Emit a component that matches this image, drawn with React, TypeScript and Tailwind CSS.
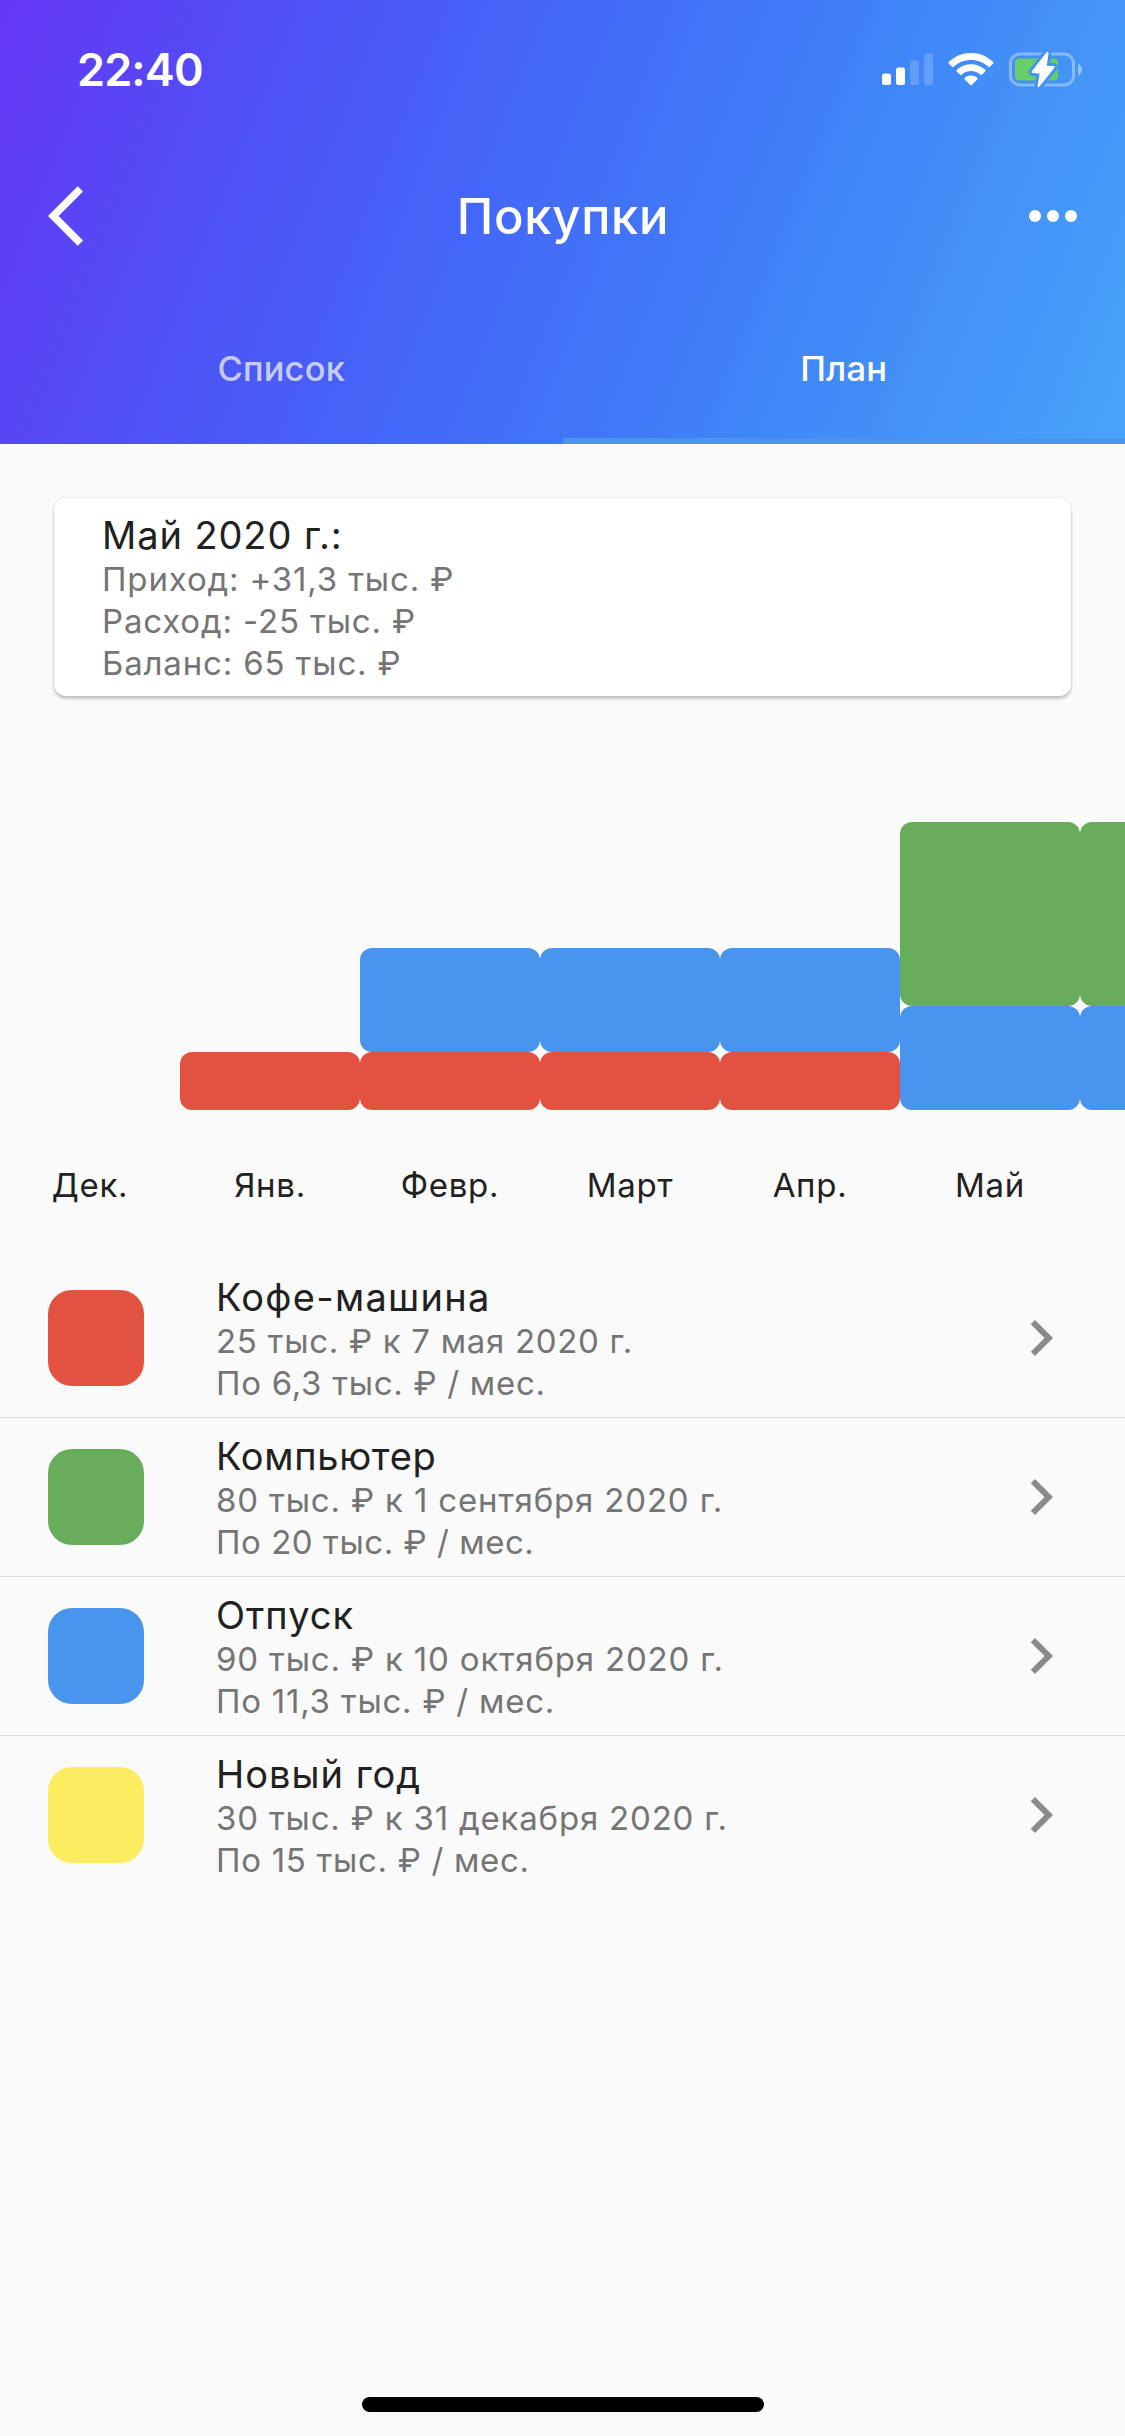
import { clsx } from "clsx";

type Goal = {
  title: string;
  titleTracking: string;
  target: string;
  targetTracking: string;
  monthly: string;
  monthlyTracking: string;
  color: string;
};

type Segment = { color: string; height: string };

const RED = "bg-[#e15241]";
const GREEN = "bg-[#67ad5b]";
const BLUE = "bg-[#4994ec]";
const YELLOW = "bg-[#fcec60]";

const goals: Goal[] = [
  {
    title: "Кофе-машина",
    titleTracking: "tracking-[1.25px]",
    target: "25 тыс. ₽ к 7 мая 2020 г.",
    targetTracking: "tracking-[0.7px]",
    monthly: "По 6,3 тыс. ₽ / мес.",
    monthlyTracking: "tracking-[0.7px]",
    color: RED,
  },
  {
    title: "Компьютер",
    titleTracking: "tracking-[0.7px]",
    target: "80 тыс. ₽ к 1 сентября 2020 г.",
    targetTracking: "tracking-[0.83px]",
    monthly: "По 20 тыс. ₽ / мес.",
    monthlyTracking: "tracking-[0.53px]",
    color: GREEN,
  },
  {
    title: "Отпуск",
    titleTracking: "tracking-[1px]",
    target: "90 тыс. ₽ к 10 октября 2020 г.",
    targetTracking: "tracking-[0.82px]",
    monthly: "По 11,3 тыс. ₽ / мес.",
    monthlyTracking: "tracking-[0.76px]",
    color: BLUE,
  },
  {
    title: "Новый год",
    titleTracking: "tracking-[1px]",
    target: "30 тыс. ₽ к 31 декабря 2020 г.",
    targetTracking: "tracking-[0.8px]",
    monthly: "По 15 тыс. ₽ / мес.",
    monthlyTracking: "tracking-[0.68px]",
    color: YELLOW,
  },
];

const coffee: Segment = { color: RED, height: "h-[58px]" };
const vacation: Segment = { color: BLUE, height: "h-[103.6px]" };
const computer: Segment = { color: GREEN, height: "h-[184.2px]" };

const months: { name: string; segments: Segment[] }[] = [
  { name: "Дек.", segments: [] },
  { name: "Янв.", segments: [coffee] },
  { name: "Февр.", segments: [vacation, coffee] },
  { name: "Март", segments: [vacation, coffee] },
  { name: "Апр.", segments: [vacation, coffee] },
  { name: "Май", segments: [computer, vacation] },
  { name: "", segments: [computer, vacation] },
];

function SignalIcon() {
  return (
    <svg width="51" height="33" viewBox="0 0 51 33" fill="#fff">
      <rect x="0" y="20.5" width="9" height="11.5" rx="2.5" />
      <rect x="14" y="14.5" width="9" height="17.5" rx="2.5" />
      <rect x="28" y="7.5" width="9" height="24.5" rx="2.5" opacity="0.18" />
      <rect x="42" y="0.5" width="9" height="31.5" rx="2.5" opacity="0.18" />
    </svg>
  );
}

function WifiIcon() {
  return (
    <svg width="46" height="33" viewBox="0 0 46 33" fill="#fff">
      <path d="M23 0C31.400 0 39.200 3.300 45.200 8.900Q46 9.700 45.200 10.500L41.900 13.800Q41.200 14.500 40.400 13.800C35.800 9.500 29.600 7 23 7S10.200 9.500 5.600 13.800Q4.800 14.500 4.100 13.800L0.800 10.500Q0 9.700 0.800 8.900C6.800 3.300 14.600 0 23 0Z" />
      <path d="M23 11.200C28.400 11.200 33.400 13.200 37.200 16.800Q38 17.600 37.200 18.400L33.900 21.700Q33.200 22.400 32.400 21.700C29.800 19.400 26.500 18.100 23 18.100S16.200 19.400 13.600 21.700Q12.800 22.400 12.100 21.700L8.800 18.400Q8 17.600 8.800 16.800C12.600 13.200 17.600 11.200 23 11.200Z" />
      <path d="M23 22.600C25.300 22.600 27.500 23.400 29.200 24.700Q30.100 25.500 29.200 26.400L23.700 32Q23 32.700 22.300 32L16.800 26.400Q15.900 25.500 16.800 24.700C18.500 23.400 20.700 22.600 23 22.600Z" />
    </svg>
  );
}

const BOLT =
  "M38 0.300Q39.600 -0.300 39.500 1.600L37.800 14.200L44.600 14.400Q46.300 14.700 45.300 16.500L30.300 35.200Q28.700 36.600 28.600 34.600L30.600 21.900L23.600 21.600Q21.900 21.300 22.900 19.500Z";

function BatteryIcon() {
  return (
    <svg width="74" height="37" viewBox="0 -0.500 74 37">
      <mask id="bolt-gap" maskUnits="userSpaceOnUse" x="0" y="-1" width="74" height="39">
        <rect x="0" y="-1" width="74" height="39" fill="#fff" />
        <path d={BOLT} fill="#000" stroke="#000" strokeWidth="6" strokeLinejoin="round" />
      </mask>
      <g mask="url(#bolt-gap)">
        <rect x="1.500" y="2.500" width="63" height="31" rx="9.500" fill="none" stroke="#fff" strokeOpacity="0.36" strokeWidth="3" />
        <rect x="6" y="7" width="43" height="22" rx="4" fill="#67ce67" />
      </g>
      <path d="M69 12C71.500 13 73 15.200 73 18S71.500 23 69 24Z" fill="#fff" fillOpacity="0.42" />
      <path d={BOLT} fill="#fff" />
    </svg>
  );
}

function StatusBar() {
  return (
    <div className="flex h-[132px] items-center justify-between pt-1.5 pr-[42px] pl-[77px]">
      <span className="text-[45px] leading-none font-semibold tracking-[-0.85px]">22:40</span>
      <div className="flex items-center">
        <SignalIcon />
        <div className="mr-[15px] ml-[15px]">
          <WifiIcon />
        </div>
        <BatteryIcon />
      </div>
    </div>
  );
}

function NavBar() {
  return (
    <div className="grid h-[168px] grid-cols-[1fr_auto_1fr] items-center">
      <svg className="ml-12" width="72" height="72" viewBox="0 0 24 24" fill="#fff">
        <path d="M11.670 3.870L9.900 2.100 0 12l9.900 9.900 1.770-1.770L3.540 12z" />
      </svg>
      <h1 className="pt-px pl-px text-[49px] leading-none font-medium tracking-[0.7px]">Покупки</h1>
      <svg className="mr-9 justify-self-end" width="72" height="72" viewBox="0 0 24 24" fill="#fff">
        <circle cx="6" cy="12" r="2" />
        <circle cx="12" cy="12" r="2" />
        <circle cx="18" cy="12" r="2" />
      </svg>
    </div>
  );
}

function Tabs() {
  return (
    <div className="grid h-36 grid-cols-2 text-[34.5px] font-medium tracking-[0.2px]">
      <div className="flex items-center justify-center border-b-[6px] border-transparent text-white/70">Список</div>
      <div className="flex items-center justify-center border-b-[6px] border-[#4994ec]">План</div>
    </div>
  );
}

function SummaryCard() {
  return (
    <section className="mx-[54px] mt-[54px] h-[198px] rounded-xl bg-white px-12 pt-[15px] shadow-[0_3px_3px_rgba(0,0,0,0.2),0_0_3px_rgba(0,0,0,0.12)]">
      <h2 className="text-[38px] leading-[45px] tracking-[0.9px] text-[#212121]">Май 2020 г.:</h2>
      <div className="text-[33px] leading-[42px] tracking-[0.84px] text-[#757575]">
        <p>Приход: +31,3 тыс. ₽</p>
        <p>Расход: -25 тыс. ₽</p>
        <p>Баланс: 65 тыс. ₽</p>
      </div>
    </section>
  );
}

function PlanChart() {
  return (
    <section className="flex overflow-hidden">
      {months.map((month, i) => (
        <div key={i} className="w-[180px] shrink-0">
          <div className="flex h-[414px] flex-col justify-end">
            {month.segments.map((s, j) => (
              <div key={j} className={clsx("rounded-xl", s.color, s.height)} />
            ))}
          </div>
          <div className="flex h-[149px] items-center justify-center pt-0.5 text-[33px] tracking-[0.7px] text-[#212121]">{month.name}</div>
        </div>
      ))}
    </section>
  );
}

function GoalRow({ goal, last }: { goal: Goal; last: boolean }) {
  return (
    <li className={clsx("flex h-[159px] items-center border-b pr-12 pl-12", last ? "border-transparent" : "border-[#dadada]")}>
      <div className={clsx("size-24 rounded-3xl", goal.color)} />
      <div className="ml-[72px] flex-1 pt-0.5">
        <h3 className={clsx("text-[38px] leading-[45px] text-[#212121]", goal.titleTracking)}>{goal.title}</h3>
        <div className="text-[33px] leading-[42px] text-[#757575]">
          <p className={goal.targetTracking}>{goal.target}</p>
          <p className={goal.monthlyTracking}>{goal.monthly}</p>
        </div>
      </div>
      <svg width="72" height="72" viewBox="0 0 24 24" fill="#8a8a8a">
        <path d="M10 6L8.590 7.410 13.170 12l-4.580 4.590L10 18l6-6z" />
      </svg>
    </li>
  );
}

export default function App() {
  return (
    <div className="flex h-[2436px] w-[1125px] flex-col bg-[#fafafa] font-['Inter','Noto_Sans',sans-serif]">
      <header className="h-[444px] bg-[linear-gradient(111.54deg,#6536f5_0%,#5050f5_22%,#4466f8_42%,#4178f7_60%,#4087f8_72%,#4595f7_86%,#48a3fa_100%)] text-white">
        <StatusBar />
        <NavBar />
        <Tabs />
      </header>
      <main className="flex-1">
        <SummaryCard />
        <PlanChart />
        <ul>
          {goals.map((goal, i) => (
            <GoalRow key={goal.title} goal={goal} last={i === goals.length - 1} />
          ))}
        </ul>
      </main>
      <div className="mx-auto mb-6 h-[15px] w-[402px] rounded-full bg-black" />
    </div>
  );
}
